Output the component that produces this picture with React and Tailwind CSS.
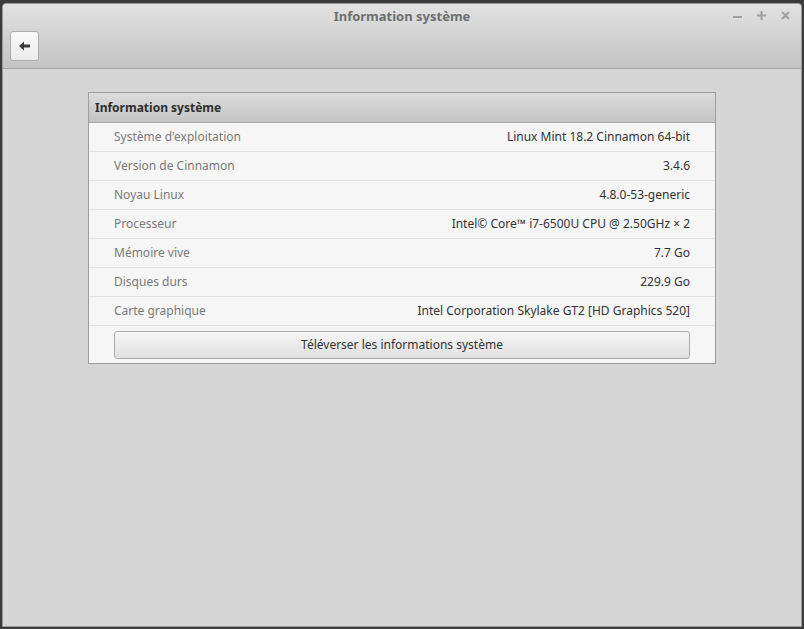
import React from 'react';

const rows = [
  ["Système d'exploitation", 'Linux Mint 18.2 Cinnamon 64-bit'],
  ['Version de Cinnamon', '3.4.6'],
  ['Noyau Linux', '4.8.0-53-generic'],
  ['Processeur', 'Intel© Core™ i7-6500U CPU @ 2.50GHz × 2'],
  ['Mémoire vive', '7.7 Go'],
  ['Disques durs', '229.9 Go'],
  ['Carte graphique', 'Intel Corporation Skylake GT2 [HD Graphics 520]'],
];

const App = () => {
  return (
    <div
      className="w-[804px] h-[629px] bg-[#3b3b3b] pt-[3px] pl-[2px] overflow-hidden"
      style={{ fontFamily: '"Noto Sans", "Open Sans", sans-serif' }}
    >
      <div className="w-[800px] h-[624px] flex flex-col bg-[#d6d6d6] rounded-t-[4px] border border-[#9a9a9a] overflow-hidden">
        {/* Barre de titre + barre d'outils */}
        <div className="h-[65px] shrink-0 bg-gradient-to-b from-[#e2e2e2] to-[#c4c4c4] border-b border-[#a3a3a3] flex flex-col">
          <div className="relative h-[26px] flex items-center justify-center">
            <span className="text-[13px] font-bold text-[#6e6e6e]">Information système</span>
            <div className="absolute right-[11px] top-[7px] flex items-center gap-[15px]">
              <svg width="9" height="9" viewBox="0 0 9 9"><rect x="0" y="5" width="9" height="2" fill="#a0a0a0" /></svg>
              <svg width="9" height="9" viewBox="0 0 9 9"><rect x="0" y="3.5" width="9" height="2" fill="#a0a0a0" /><rect x="3.5" y="0" width="2" height="9" fill="#a0a0a0" /></svg>
              <svg width="9" height="9" viewBox="0 0 9 9"><path d="M1 1L8 8M8 1L1 8" stroke="#a0a0a0" strokeWidth="2" /></svg>
            </div>
          </div>
          <div className="pl-[7px] pt-[1px]">
            <button className="w-[29px] h-[30px] rounded-[3px] border border-[#acacac] bg-gradient-to-b from-[#fafafa] to-[#ececec] flex items-center justify-center">
              <svg width="12" height="10" viewBox="0 0 12 10">
                <path d="M0 5L5 0.5V3.5H11V6.5H5V9.5Z" fill="#3c3c3c" />
              </svg>
            </button>
          </div>
        </div>

        {/* Contenu */}
        <div className="flex-1 pt-[23px] pl-[85px]">
          <div className="w-[628px] border border-[#9e9e9e] bg-[#f6f6f6]">
            <div className="h-[30px] bg-gradient-to-b from-[#dcdcdc] to-[#c4c4c4] border-b border-[#a8a8a8] flex items-center pl-[6px]">
              <span className="text-[12px] font-bold text-[#2f2f2f]">Information système</span>
            </div>
            {rows.map(([label, value]) => (
              <div key={label} className="h-[29px] border-b border-[#e2e2e2] flex items-center justify-between pl-[25px] pr-[25px] text-[12px]">
                <span className="text-[#7a7a7a]">{label}</span>
                <span className="text-[#333333]">{value}</span>
              </div>
            ))}
            <div className="px-[25px] pt-[5px] pb-[4px]">
              <button className="w-full h-[28px] rounded-[3px] border border-[#acacac] bg-gradient-to-b from-[#f6f6f6] to-[#e0e0e0] text-[12px] text-[#333333]">
                Téléverser les informations système
              </button>
            </div>
          </div>
        </div>
      </div>
    </div>
  );
};

export default App;
